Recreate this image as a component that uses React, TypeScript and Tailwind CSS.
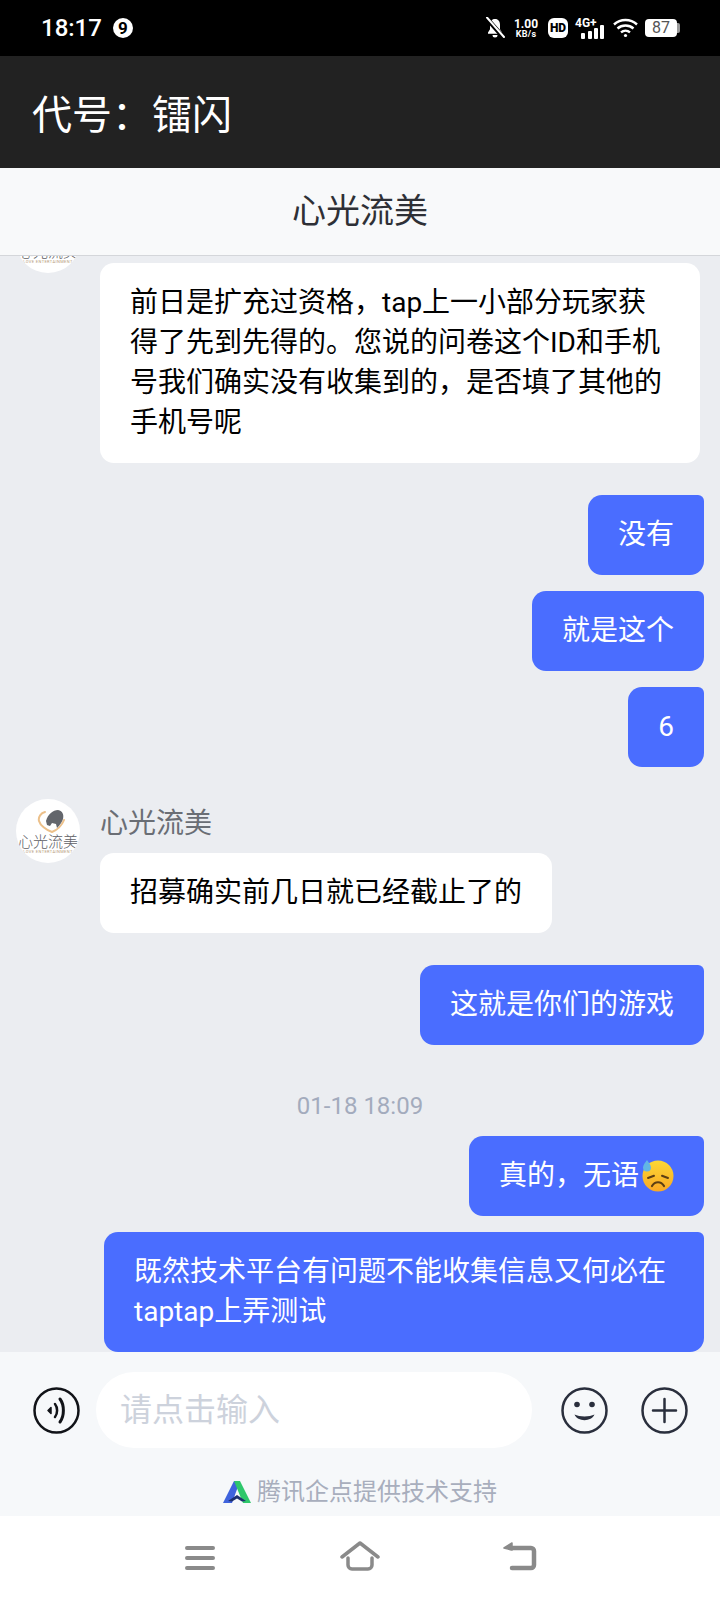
import React from "react";

const FONT = "[font-family:Roboto,'Noto_Sans_CJK_SC',sans-serif]";

function Bell() {
  return (
    <svg width="20" height="22" viewBox="0 0 20 22" fill="none">
      <path d="M10 2c-3.400 0-5 2.600-5 5.600v4.600L3 15.500v1.200h14v-1.200l-2-3.300V7.600C15 4.600 13.400 2 10 2z" fill="#fff" />
      <path d="M7.500 18a2.500 2.500 0 0 0 5 0z" fill="#fff" />
      <path d="M1.500 1 18.500 20.500" stroke="#000" strokeWidth="4.500" />
      <path d="M2 .5 19 20" stroke="#fff" strokeWidth="2" strokeLinecap="round" />
    </svg>
  );
}

function StatusBar() {
  return (
    <div className="h-14 bg-black text-white flex items-center justify-between pl-[41px] pr-10 shrink-0">
      <div className="flex items-center gap-[11px]">
        <span className="text-2xl leading-none font-medium">18:17</span>
        <span className="w-5 h-5 rounded-full bg-white text-black flex items-center justify-center text-[17px] leading-none font-bold">9</span>
      </div>
      <div className="flex items-center">
        <Bell />
        <div className="flex flex-col items-center ml-[9px] w-[24px] font-bold">
          <span className="text-[12px] leading-[12px]">1.00</span>
          <span className="text-[9px] leading-[9px] tracking-[0.3px]">KB/s</span>
        </div>
        <span className="ml-[10px] w-5 h-5 bg-white rounded-[6px] text-black flex items-center justify-center text-[12px] font-black leading-none">HD</span>
        <div className="ml-[7px] relative w-[30px] h-[21px]">
          <span className="absolute left-0 -top-[2px] text-[12px] leading-[14px] font-bold">4G+</span>
          <svg className="absolute left-[6px] bottom-0" width="24" height="14" viewBox="0 0 24 14" fill="#fff">
            <rect x="0" y="8" width="4" height="6" rx="1" />
            <rect x="7" y="6" width="4" height="8" rx="1" />
            <rect x="13" y="3" width="4" height="11" rx="1" />
            <rect x="19" y="0" width="4" height="14" rx="1" />
          </svg>
        </div>
        <svg className="ml-[8px]" width="25" height="20" viewBox="0 0 25 20" fill="none" stroke="#fff" strokeWidth="2.400">
          <path d="M1 6.500C7.500.5 17.500.5 24 6.500" />
          <path d="M4.500 10.500c4.500-4 11.500-4 16 0" />
          <path d="M8 14.300c2.600-2.200 6.400-2.200 9 0" />
          <circle cx="12.500" cy="17.500" r="1.600" fill="#fff" stroke="none" />
        </svg>
        <div className="ml-[7px] flex items-center">
          <div className="w-[32px] h-[18px] rounded-[4px] bg-white text-[#555] text-[16px] leading-[18px] text-center font-normal">87</div>
          <div className="w-[3px] h-[10px] bg-[#999] rounded-r-[2px]" />
        </div>
      </div>
    </div>
  );
}

function Avatar() {
  return (
    <div className="w-16 h-16 rounded-full bg-white shrink-0 flex flex-col items-center pt-[10px] overflow-hidden">
      <svg width="28" height="24" viewBox="0 0 28 24" fill="none" className="ml-[6px] shrink-0">
        <path d="M8 3C4 4 1 8 2 12c1 4 7 9 13 11 5-2 10-7 12-12" stroke="#ecc08a" strokeWidth="2" strokeLinecap="round" />
        <path d="M9 12c2-7 7-11 12-11 5 1 6 5 5 9-1 3-3 6-6 9l-1-4-4-1-2 3-3-1z" fill="#63666c" />
      </svg>
      <span className="text-[15px] leading-[14px] text-[#5e6065] font-light mt-[2px] shrink-0">心光流美</span>
      <span className="text-[4px] leading-[6px] text-[#b59a78] tracking-[0.4px] shrink-0 whitespace-nowrap">LOVE ENTERTAINMENT</span>
    </div>
  );
}

function Incoming({ children, width }: { children: React.ReactNode; width: string }) {
  return (
    <div className="flex pl-4 pr-5 gap-5 mt-8 first:mt-0">
      <Avatar />
      <div className="flex flex-col items-start">
        <div className="text-[28px] leading-[50px] h-[46px] text-[#6a6e75]">心光流美</div>
        <div className={`bg-white rounded-[14px] px-[30px] py-5 text-[28px] leading-10 text-black mt-2 ${width}`}>{children}</div>
      </div>
    </div>
  );
}

function Outgoing({ children, tight }: { children: React.ReactNode; tight?: boolean }) {
  return (
    <div className={`flex justify-end pr-4 ${tight ? "mt-4" : "mt-8"}`}>
      <div className="bg-[#4a6dff] rounded-[14px] rounded-tr-[6px] px-[30px] py-5 text-[28px] leading-10 text-white">{children}</div>
    </div>
  );
}

function SweatEmoji() {
  return (
    <svg className="inline-block align-[-7px]" width="35" height="34" viewBox="0 0 35 34">
      <defs>
        <linearGradient id="emojiFace" x1="0" y1="0" x2="0" y2="1">
          <stop offset="0" stopColor="#fdd835" />
          <stop offset="1" stopColor="#f9a825" />
        </linearGradient>
      </defs>
      <circle cx="19" cy="18" r="15.500" fill="url(#emojiFace)" />
      <path d="M8 2c1.800 2.600 4 5 4 7.500a4 4 0 0 1-8 0C4 7 6.200 4.600 8 2z" fill="#62b5e5" />
      <path d="M9 20l6-2.200M23 17.800l6 2.200" stroke="#5d3f14" strokeWidth="2" strokeLinecap="round" />
      <path d="M13 28c3-5 9-5 12 0" stroke="#5d3f14" strokeWidth="2.200" fill="none" strokeLinecap="round" />
    </svg>
  );
}

function InputBar() {
  return (
    <div className="bg-[#f6f8fa] h-[164px] shrink-0 flex flex-col">
      <div className="flex items-center pl-[33px] pr-8 mt-5 h-[76px]">
        <svg width="47" height="47" viewBox="0 0 47 47" fill="none" stroke="#111318" strokeWidth="2.500" className="shrink-0">
          <circle cx="23.500" cy="23.500" r="22" />
          <path d="M15 23.500l3-3v6z" fill="#111318" strokeWidth="1.500" strokeLinejoin="round" />
          <path d="M22 17c2.800 3.500 2.800 9.500 0 13" strokeLinecap="round" />
          <path d="M27 12c4.500 6 4.500 17 0 23" strokeWidth="3" strokeLinecap="round" />
        </svg>
        <div className="ml-4 w-[436px] h-[76px] bg-white rounded-[38px] flex items-center pl-6 text-[32px] text-[#cdd2dc] shrink-0">请点击输入</div>
        <svg width="47" height="47" viewBox="0 0 47 47" fill="none" stroke="#2a2f3d" strokeWidth="2.500" className="ml-[29px] shrink-0">
          <circle cx="23.500" cy="23.500" r="22" />
          <circle cx="16" cy="17.500" r="2.800" fill="#2a2f3d" stroke="none" />
          <circle cx="31" cy="17.500" r="2.800" fill="#2a2f3d" stroke="none" />
          <path d="M13.500 27.500c3 7.500 17 7.500 20 0-5 2.500-15 2.500-20 0z" fill="#2a2f3d" stroke="none" />
        </svg>
        <svg width="47" height="47" viewBox="0 0 47 47" fill="none" stroke="#2a2f3d" strokeWidth="2.500" className="ml-[33px] shrink-0">
          <circle cx="23.500" cy="23.500" r="22" />
          <path d="M12 23.500h23M23.500 12v23" strokeLinecap="round" />
        </svg>
      </div>
      <div className="flex items-center justify-center mt-[29px] h-[30px] pl-[2px]">
        <svg width="28" height="22" viewBox="0 0 28 22" className="mr-[6px] ml-[-2px]">
          <path d="M11 0h6L9 22H0z" fill="#3f63dd" />
          <path d="M11 0h6l11 22h-8z" fill="#2fc76b" />
          <path d="M5 20l9-6 9 6-4 .5-5-3-5 3z" fill="#1d2f6e" />
        </svg>
        <span className="text-2xl leading-[30px] text-[#a8aebd]">腾讯企点提供技术支持</span>
      </div>
    </div>
  );
}

function NavBar() {
  return (
    <div className="h-[84px] bg-white shrink-0 flex items-start pt-[25px] pl-[184px]">
      <svg width="32" height="30" viewBox="0 0 32 30" fill="none" stroke="#8a8a8a" strokeWidth="4" strokeLinecap="round">
        <path d="M3 7h26M3 17h26M3 27h26" />
      </svg>
      <svg width="40" height="30" viewBox="0 0 40 30" fill="none" stroke="#8a8a8a" strokeWidth="3.500" strokeLinecap="round" strokeLinejoin="round" className="ml-[124px]">
        <path d="M2 16 20 2l18 14" />
        <path d="M8 17v7a4 4 0 0 0 4 4h16a4 4 0 0 0 4-4v-7" />
      </svg>
      <svg width="36" height="30" viewBox="0 0 36 30" fill="none" stroke="#8a8a8a" strokeWidth="4.500" strokeLinecap="round" strokeLinejoin="round" className="ml-[122px]">
        <path d="M8 7h21a3 3 0 0 1 3 3v14a3 3 0 0 1-3 3H10" />
        <path d="M10 2 2 7l8 2z" fill="#8a8a8a" strokeWidth="1.500" />
      </svg>
    </div>
  );
}

export default function App() {
  return (
    <div className={`w-[720px] h-[1600px] flex flex-col overflow-hidden ${FONT}`}>
      <StatusBar />
      <div className="h-28 bg-[#222222] text-white text-[40px] flex items-center pl-8 pt-2 shrink-0">代号：镭闪</div>
      <div className="h-[88px] bg-[#f8f9fa] border-b border-[#d4d6da] text-[#2e3036] text-[34px] flex items-center justify-center shrink-0">心光流美</div>
      <div className="flex-1 min-h-0 bg-[#ebedf1] flex flex-col justify-end overflow-hidden">
        <Incoming width="w-[600px]">
          前日是扩充过资格，tap上一小部分玩家获得了先到先得的。您说的问卷这个ID和手机号我们确实没有收集到的，是否填了其他的手机号呢
        </Incoming>
        <Outgoing>没有</Outgoing>
        <Outgoing tight>就是这个</Outgoing>
        <Outgoing tight>6</Outgoing>
        <Incoming width="">招募确实前几日就已经截止了的</Incoming>
        <Outgoing>这就是你们的游戏</Outgoing>
        <div className="text-center text-2xl leading-[30px] h-[29px] text-[#a3abbd] mt-[46px]">01-18 18:09</div>
        <Outgoing tight>
          真的，无语<SweatEmoji />
        </Outgoing>
        <div className="flex justify-end pr-4 mt-4">
          <div className="w-[600px] bg-[#4a6dff] rounded-[14px] rounded-tr-[6px] px-[30px] py-5 text-[28px] leading-10 text-white">
            既然技术平台有问题不能收集信息又何必在taptap上弄测试
          </div>
        </div>
      </div>
      <InputBar />
      <NavBar />
    </div>
  );
}
